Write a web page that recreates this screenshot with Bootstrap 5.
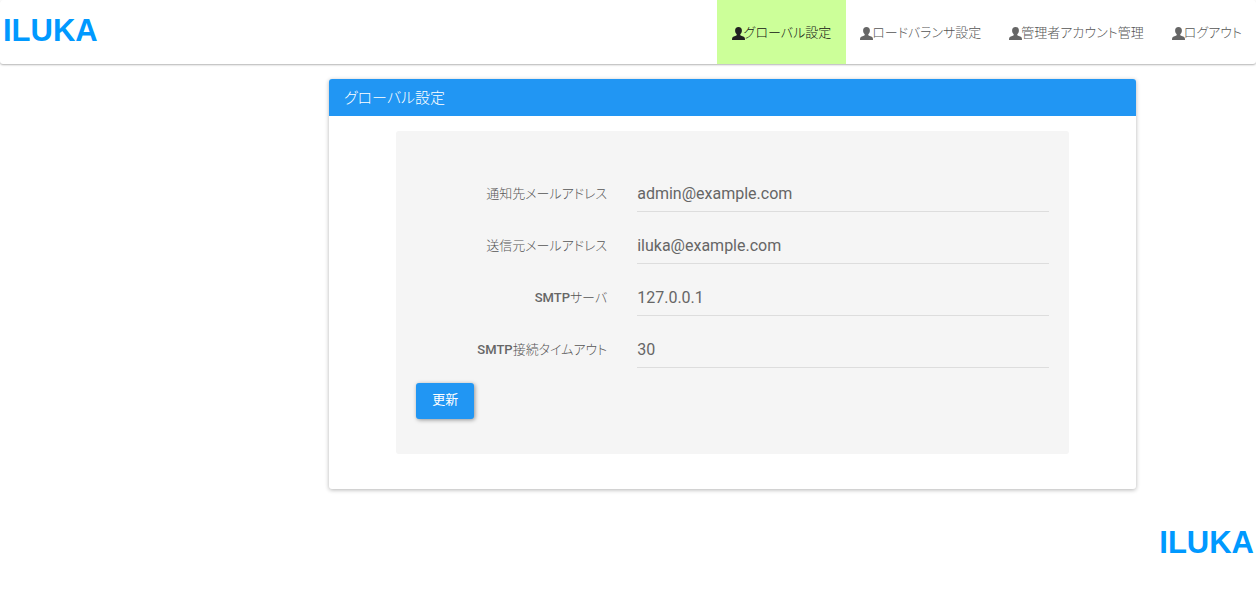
<!DOCTYPE html>
<html lang="ja">
<head>
<meta charset="utf-8">
<meta name="viewport" content="width=device-width, initial-scale=1">
<title>ILUKA - グローバル設定</title>
<link href="https://cdn.jsdelivr.net/npm/bootstrap@5.3.0/dist/css/bootstrap.min.css" rel="stylesheet">
<style>
  body { font-family: Roboto, "Noto Sans CJK JP", sans-serif; font-size: 13px; line-height: 24px; color: #666; font-feature-settings: "palt"; }
  .row { --bs-gutter-x: 30px; }
  .brand-logo { font: bold 31px/36px "Liberation Sans", Arial, sans-serif; color: #0099ff; padding: 0 2px 0 3px; }
  .topbar { min-height: 64px; border-radius: 3px; box-shadow: 0 1px 2px rgba(0, 0, 0, .3); }
  .topbar .brand-logo { padding-top: 13px; }
  .topbar .nav-item .nav-link { padding: 21px 14px 19px; color: #555; font-weight: 300; }
  .topbar .nav-item .nav-link.active { background: #ccff99; color: #111; padding-left: 15px; padding-right: 15px; }
  .user-icon { width: 13px; height: 13px; margin-right: -1px; fill: #666; flex: none; }
  .active .user-icon { fill: #212121; }
  .panel { margin: 15px 0 20px; border: 0; border-radius: 3px; box-shadow: 0 1px 4px rgba(0, 0, 0, .3); }
  .panel .card-header { background: #2196f3; color: #fff; border: 0; margin: 0; padding: 9px 15px 8px; font-size: 15px; line-height: 20px; font-weight: 300; border-radius: 3px 3px 0 0; }
  .panel-content { padding: 15px 0 35px; }
  .well { background: #f5f5f5; border-radius: 3px; padding: 44px 20px 35px; }
  .field-row { margin-bottom: 15px; }
  .settings .col-form-label { line-height: 23px; padding: 7px 15px; font-weight: 300; color: #555; }
  .latin { font-weight: 500; color: #666; }
  .settings .form-control { height: 37px; padding: 0; border: 0; border-radius: 0; background: transparent; box-shadow: inset 0 -1px 0 #ddd; font-size: 16px; color: #666; }
  .settings .form-control:focus { box-shadow: inset 0 -2px 0 #2196f3; }
  .btn-update { background: #2196f3; color: #fff; border: 0; border-radius: 3px; padding: 5px 16px 7px; font-size: 13px; line-height: 24px; box-shadow: 1px 1px 4px rgba(0, 0, 0, .4); }
  .btn-update:hover { background: #0d87e9; color: #fff; }
</style>
</head>
<body>
<svg class="d-none" aria-hidden="true">
  <symbol id="user" viewBox="0 0 13 13"><path d="M6.500 0C8.700 0 9.900 1.400 9.900 3.400C9.900 5.200 9.200 6.300 8.300 7.200V8.200C9 8.900 12 9.500 12.600 10.400C13 11 13 12 13 13H0C0 12 0 11 .4 10.400C1 9.500 4 8.900 4.700 8.200V7.200C3.800 6.300 3.100 5.200 3.100 3.400C3.100 1.400 4.300 0 6.500 0Z"/></symbol>
</svg>

<nav class="topbar navbar navbar-expand p-0 align-items-stretch">
  <a class="brand-logo text-decoration-none" href="#">ILUKA</a>
  <ul class="navbar-nav ms-auto">
    <li class="nav-item"><a class="nav-link active d-flex align-items-center" aria-current="page" href="#"><svg class="user-icon"><use href="#user"/></svg>グローバル設定</a></li>
    <li class="nav-item"><a class="nav-link d-flex align-items-center" href="#"><svg class="user-icon"><use href="#user"/></svg>ロードバランサ設定</a></li>
    <li class="nav-item"><a class="nav-link d-flex align-items-center" href="#"><svg class="user-icon"><use href="#user"/></svg>管理者アカウント管理</a></li>
    <li class="nav-item"><a class="nav-link d-flex align-items-center" href="#"><svg class="user-icon"><use href="#user"/></svg>ログアウト</a></li>
  </ul>
</nav>

<main class="row mx-0">
  <div class="col-8 offset-3">
    <section class="panel card">
      <h1 class="card-header">グローバル設定</h1>
      <div class="panel-content row mx-0">
        <form class="settings well col-10 offset-1">
          <div class="field-row row">
            <label class="col-4 col-form-label text-end" for="notify">通知先メールアドレス</label>
            <div class="col-8"><input class="form-control d-block" id="notify" type="email" value="admin@example.com"></div>
          </div>
          <div class="field-row row">
            <label class="col-4 col-form-label text-end" for="sender">送信元メールアドレス</label>
            <div class="col-8"><input class="form-control d-block" id="sender" type="email" value="iluka@example.com"></div>
          </div>
          <div class="field-row row">
            <label class="col-4 col-form-label text-end" for="smtp"><span class="latin">SMTP</span>サーバ</label>
            <div class="col-8"><input class="form-control d-block" id="smtp" type="text" value="127.0.0.1"></div>
          </div>
          <div class="field-row row">
            <label class="col-4 col-form-label text-end" for="timeout"><span class="latin">SMTP</span>接続タイムアウト</label>
            <div class="col-8"><input class="form-control d-block" id="timeout" type="text" value="30"></div>
          </div>
          <button class="btn btn-update d-block" type="submit">更新</button>
        </form>
      </div>
    </section>
  </div>
</main>

<footer class="d-flex justify-content-end pt-3">
  <a class="brand-logo text-decoration-none" href="#">ILUKA</a>
</footer>
<script src="https://cdn.jsdelivr.net/npm/bootstrap@5.3.0/dist/js/bootstrap.bundle.min.js"></script>
</body>
</html>
